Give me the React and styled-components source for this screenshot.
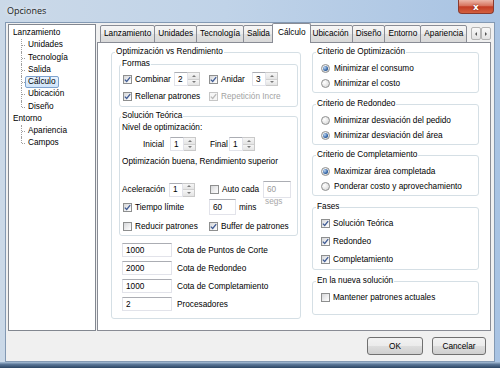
import React from 'react';
import styled, { createGlobalStyle } from 'styled-components';

const FONT_SIZE = '8.25px';

const GlobalStyle = createGlobalStyle`
  html, body { margin: 0; padding: 0; }
  body {
    width: 500px;
    height: 368px;
    overflow: hidden;
    font-family: "Liberation Sans", Arial, sans-serif;
    font-size: ${FONT_SIZE};
    color: #000;
    background: #fff;
  }
  * { box-sizing: border-box; }
`;

/* window chrome */

const Window = styled.div`
  width: 500px;
  height: 368px;
  display: flex;
  flex-direction: column;
  background: linear-gradient(90deg, #cbd9e8 0%, #c0d3e8 45%, #a8c3e3 100%);
`;

const TitleBar = styled.div`
  flex: none;
  height: 22px;
  display: flex;
  justify-content: space-between;
  align-items: flex-start;
  padding: 0 6px 0 7px;
`;

const Title = styled.div`
  font-family: "Open Sans", "Liberation Sans", sans-serif;
  font-size: 9px;
  line-height: 22px;
  color: #1b1b1b;
  text-shadow: 0 0 5px rgba(255, 255, 255, 0.95);
`;

const CloseButton = styled.div`
  width: 36px;
  height: 14px;
  display: flex;
  align-items: center;
  justify-content: center;
  border: 1px solid #8a3a2e;
  border-top: none;
  border-radius: 0 0 4px 4px;
  background: linear-gradient(#ecb7a9, #d7735d 45%, #c33c24 52%, #d3603f 100%);
  color: #fff;
  font-family: "DejaVu Sans", sans-serif;
  font-weight: bold;
  font-size: 9px;
  text-shadow: 0 0 2px #6b1a10;
`;

const Client = styled.div`
  flex: 1;
  margin: 0 5px;
  border: 1px solid #8399b3;
  background: #f0f0f0;
  display: flex;
  flex-direction: column;
  padding: 0 3px 6px 2px;
`;

const BottomFrame = styled.div`
  flex: none;
  height: 6px;
  background: linear-gradient(#a9c0d8, #5a7697 40%, #2c4563 100%);
`;

const Body = styled.div`
  height: 308px;
  display: flex;
  gap: 1px;
`;

/* tree */

const Tree = styled.div`
  width: 88px;
  margin-top: 1px;
  border: 1px solid #828790;
  background: #fff;
  padding: 2px 0 0 0;
`;

const TreeRow = styled.div`
  position: relative;
  height: 12.25px;
  display: flex;
  align-items: center;
  padding-left: ${p => (p.$leaf ? 16 : 1)}px;

  ${p => p.$leaf && `
    &::before {
      content: '';
      position: absolute;
      left: 12px;
      top: 0;
      bottom: ${p.$last ? '50%' : '0'};
      border-left: 1px dotted #a0a0a0;
    }
    &::after {
      content: '';
      position: absolute;
      left: 13px;
      top: 50%;
      width: 3px;
      border-top: 1px dotted #a0a0a0;
    }
  `}
`;

const TreeLabel = styled.span`
  line-height: 10px;
  padding: 0 2px;
  border: 1px solid ${p => (p.$selected ? '#7da2ce' : 'transparent')};
  border-radius: 2px;
  background: ${p => (p.$selected ? 'linear-gradient(#ebf4fe, #cfe4fa)' : 'none')};
`;

/* tabs */

const Tabs = styled.div`
  width: 394px;
  display: flex;
  flex-direction: column;
`;

const TabStrip = styled.div`
  height: 20px;
  margin-bottom: -1px;
  display: flex;
  align-items: flex-end;
  position: relative;
  z-index: 1;
`;

const TabList = styled.div`
  flex: 1;
  min-width: 0;
  height: 20px;
  overflow: hidden;
  display: flex;
  align-items: flex-end;
  padding-left: 4px;
`;

const Tab = styled.div`
  flex: none;
  position: relative;
  z-index: ${p => (p.$selected ? 2 : 0)};
  height: ${p => (p.$selected ? 20 : 18)}px;
  margin-left: ${p => (p.$selected ? -2 : -1)}px;
  margin-right: ${p => (p.$selected ? -2 : 0)}px;
  padding: 0 ${p => (p.$selected ? 5 : 3)}px;
  border: 1px solid #898c95;
  border-bottom: ${p => (p.$selected ? 'none' : '1px solid #898c95')};
  border-radius: 2px 2px 0 0;
  background: ${p =>
    p.$selected ? '#fff' : 'linear-gradient(#f6f6f6, #ececec 50%, #e0e0e0 51%, #d9d9d9)'};
  line-height: ${p => (p.$selected ? 18 : 16)}px;
  white-space: nowrap;
`;

const TabScroll = styled.div`
  flex: none;
  display: flex;
  margin-bottom: 3px;
`;

const ScrollButton = styled.div`
  width: 10px;
  height: 13px;
  border: 1px solid #b4b4b4;
  border-radius: 2px;
  background: linear-gradient(#f8f8f8, #e2e2e2);
  display: flex;
  align-items: center;
  justify-content: center;
`;

const Arrow = styled.span`
  width: 0;
  height: 0;
  ${p => {
    const c = p.$color || '#555';
    if (p.$dir === 'left') return `border-top: 2px solid transparent; border-bottom: 2px solid transparent; border-right: 2px solid ${c};`;
    if (p.$dir === 'right') return `border-top: 2px solid transparent; border-bottom: 2px solid transparent; border-left: 2px solid ${c};`;
    if (p.$dir === 'up') return `border-left: 2px solid transparent; border-right: 2px solid transparent; border-bottom: 2px solid ${c};`;
    return `border-left: 2px solid transparent; border-right: 2px solid transparent; border-top: 2px solid ${c};`;
  }}
`;

const TabPage = styled.div`
  flex: 1;
  background: #fff;
  border: 1px solid #898c95;
  display: flex;
  align-items: flex-start;
  gap: 11px;
  padding: 4px 0 0 13px;
`;

/* group boxes */

const Group = styled.fieldset`
  margin: ${p => p.$mt || 0}px 0 0 0;
  min-width: 0;
  width: ${p => (p.$w ? `${p.$w}px` : 'auto')};
  padding: 0;
  border: 1px solid #d5dfe5;
  border-radius: 3px;
`;

const Legend = styled.legend`
  margin-left: ${p => (p.$inner ? 1 : 3)}px;
  padding: 0 1px;
  line-height: 10px;
  font-size: ${FONT_SIZE};
`;

const GroupBody = styled.div`
  display: flex;
  flex-direction: column;
  gap: ${p => p.$gap || 0}px;
  padding: ${p => p.$pad};
`;

const RightColumn = styled.div`
  width: 167px;
  display: flex;
  flex-direction: column;
`;

/* rows and controls */

const Row = styled.div`
  display: flex;
  align-items: center;
  height: ${p => p.$h || 14}px;
  margin-top: ${p => p.$mt || 0}px;
  padding-left: ${p => p.$pl || 0}px;
  gap: ${p => p.$gap || 0}px;
`;

const Cell = styled.div`
  flex: none;
  display: flex;
  align-items: center;
  width: ${p => (p.$w ? `${p.$w}px` : 'auto')};
  padding-left: ${p => p.$pl || 0}px;
`;

const Text = styled.div`
  line-height: 10px;
  margin-top: ${p => p.$mt || 0}px;
  white-space: nowrap;
`;

const Label = styled.span`
  flex: none;
  white-space: nowrap;
  width: ${p => (p.$w ? `${p.$w}px` : 'auto')};
  color: ${p => (p.$disabled ? '#a3a3a3' : '#000')};
`;

const Box = styled.span`
  flex: none;
  width: 9px;
  height: 9px;
  margin-right: 3px;
  border: 1px solid ${p => (p.$disabled ? '#c6c6c6' : '#8e8f8f')};
  background: ${p =>
    p.$disabled ? '#f6f6f6' : 'linear-gradient(135deg, #d6d7d9 0%, #eeeeef 55%, #ffffff 100%)'};
  display: flex;
  align-items: center;
  justify-content: center;
`;

const RadioDot = styled.span`
  flex: none;
  width: 9px;
  height: 9px;
  margin-right: 4px;
  border-radius: 50%;
  border: 1px solid #8e8f8f;
  background: radial-gradient(circle at 35% 35%, #ffffff, #d2d2d2);
  display: flex;
  align-items: center;
  justify-content: center;

  &::after {
    content: '';
    display: ${p => (p.$on ? 'block' : 'none')};
    width: 5px;
    height: 5px;
    border-radius: 50%;
    background: radial-gradient(circle at 35% 35%, #bcd6f3, #2a5d9f 65%, #163f78);
  }
`;

const Field = styled.input`
  flex: none;
  width: ${p => p.$w}px;
  height: ${p => p.$h || 14}px;
  margin: 0 ${p => p.$mr || 0}px 0 0;
  padding: 0 0 0 3px;
  border: 1px solid #e2e3ea;
  border-top-color: #abadb3;
  background: #fff;
  font: inherit;
  font-size: ${FONT_SIZE};
  color: ${p => (p.disabled ? '#9a9a9a' : '#000')};
  outline: none;
`;

const Spin = styled.div`
  flex: none;
  display: flex;
  height: 14px;
`;

const SpinButtons = styled.div`
  width: 12px;
  display: flex;
  flex-direction: column;
  border: 1px solid #c9c9c9;
  border-left: none;
`;

const SpinHalf = styled.div`
  flex: 1;
  display: flex;
  align-items: center;
  justify-content: center;
  background: linear-gradient(#f6f6f6, #e4e4e4);
  & + & { border-top: 1px solid #d0d0d0; }
`;

const DisabledWrap = styled.div`
  display: flex;
  flex-direction: column;
  align-items: flex-start;
`;

const Caption = styled.span`
  line-height: 7px;
  margin: 0 0 -7px 2px;
  color: #a8a8a8;
`;

const ButtonRow = styled.div`
  display: flex;
  justify-content: flex-end;
  gap: 9px;
  margin-top: 6px;
  padding-right: 5px;
`;

const Button = styled.button`
  width: ${p => p.$w}px;
  height: 18px;
  padding: 0;
  border: 1px solid #707070;
  border-radius: 3px;
  background: linear-gradient(#f2f2f2, #ebebeb 50%, #dddddd 51%, #cfcfcf);
  font: inherit;
  font-size: ${FONT_SIZE};
  color: #000;
`;

const Check = ({ checked, disabled, children, w }) => (
  <>
    <Box $disabled={disabled}>
      {checked && (
        <svg width="7" height="7" viewBox="0 0 7 7">
          <path
            d="M0.8 3.6 L2.7 5.5 L6.2 1.2"
            fill="none"
            stroke={disabled ? '#b9b9b9' : '#3f5b94'}
            strokeWidth="1.3"
          />
        </svg>
      )}
    </Box>
    <Label $w={w} $disabled={disabled}>{children}</Label>
  </>
);

const Radio = ({ on, children }) => (
  <Row>
    <RadioDot $on={on} />
    <Label>{children}</Label>
  </Row>
);

const SpinBox = ({ value }) => (
  <Spin>
    <Field $w={14} readOnly value={value} />
    <SpinButtons>
      <SpinHalf><Arrow $dir="up" $color="#7a7a7a" /></SpinHalf>
      <SpinHalf><Arrow $dir="down" $color="#7a7a7a" /></SpinHalf>
    </SpinButtons>
  </Spin>
);

const treeData = [
  { name: 'Lanzamiento', children: ['Unidades', 'Tecnología', 'Salida', 'Cálculo', 'Ubicación', 'Diseño'] },
  { name: 'Entorno', children: ['Apariencia', 'Campos'] },
];

const tabs = ['Lanzamiento', 'Unidades', 'Tecnología', 'Salida', 'Cálculo', 'Ubicación', 'Diseño', 'Entorno', 'Apariencia'];

const bounds = [
  ['1000', 'Cota de Puntos de Corte'],
  ['2000', 'Cota de Redondeo'],
  ['1000', 'Cota de Completamiento'],
  ['2', 'Procesadores'],
];

const App = () => (
  <>
    <GlobalStyle />
    <Window>
      <TitleBar>
        <Title>Opciones</Title>
        <CloseButton>x</CloseButton>
      </TitleBar>
      <Client>
        <Body>
          <Tree>
            {treeData.map(node => (
              <React.Fragment key={node.name}>
                <TreeRow>
                  <TreeLabel>{node.name}</TreeLabel>
                </TreeRow>
                {node.children.map((c, i) => (
                  <TreeRow key={c} $leaf $last={i === node.children.length - 1}>
                    <TreeLabel $selected={c === 'Cálculo'}>{c}</TreeLabel>
                  </TreeRow>
                ))}
              </React.Fragment>
            ))}
          </Tree>

          <Tabs>
            <TabStrip>
              <TabList>
                {tabs.map(t => (
                  <Tab key={t} $selected={t === 'Cálculo'}>{t}</Tab>
                ))}
              </TabList>
              <TabScroll>
                <ScrollButton><Arrow $dir="left" /></ScrollButton>
                <ScrollButton><Arrow $dir="right" /></ScrollButton>
              </TabScroll>
            </TabStrip>

            <TabPage>
              <Group $w={190}>
                <Legend>Optimización vs Rendimiento</Legend>
                <GroupBody $pad="2px 2px 7px 7px">
                  <Group>
                    <Legend $inner>Formas</Legend>
                    <GroupBody $pad="3px 0 3px 3px" $gap={3}>
                      <Row>
                        <Cell $w={86}>
                          <Check checked w={39}>Combinar</Check>
                          <SpinBox value="2" />
                        </Cell>
                        <Cell>
                          <Check checked w={31}>Anidar</Check>
                          <SpinBox value="3" />
                        </Cell>
                      </Row>
                      <Row>
                        <Cell $w={86}>
                          <Check checked>Rellenar patrones</Check>
                        </Cell>
                        <Cell>
                          <Check checked disabled>Repetición Incre</Check>
                        </Cell>
                      </Row>
                    </GroupBody>
                  </Group>

                  <Group $mt={4}>
                    <Legend $inner>Solución Teórica</Legend>
                    <GroupBody $pad="0 0 2px 2px">
                      <Text $mt={2}>Nivel de optimización:</Text>
                      <Row $mt={4}>
                        <Cell $w={87} $pl={21}>
                          <Label $w={27}>Inicial</Label>
                          <SpinBox value="1" />
                        </Cell>
                        <Cell $pl={1}>
                          <Label $w={19}>Final</Label>
                          <SpinBox value="1" />
                        </Cell>
                      </Row>
                      <Text $mt={6}>Optimización buena, Rendimiento superior</Text>
                      <Row $mt={14} $h={17}>
                        <Cell $w={87}>
                          <Label $w={47}>Aceleración</Label>
                          <SpinBox value="1" />
                        </Cell>
                        <Cell $pl={1}>
                          <Check w={41}>Auto cada</Check>
                          <DisabledWrap>
                            <Field $w={28} $h={17} disabled readOnly value="60" />
                            <Caption>segs</Caption>
                          </DisabledWrap>
                        </Cell>
                      </Row>
                      <Row $mt={1} $h={16}>
                        <Cell $w={87} $pl={1}>
                          <Check checked>Tiempo límite</Check>
                        </Cell>
                        <Cell>
                          <Field $w={27} $h={16} $mr={3} readOnly value="60" />
                          <Label>mins</Label>
                        </Cell>
                      </Row>
                      <Row $mt={4}>
                        <Cell $w={87} $pl={1}>
                          <Check>Reducir patrones</Check>
                        </Cell>
                        <Cell>
                          <Check checked>Buffer de patrones</Check>
                        </Cell>
                      </Row>
                    </GroupBody>
                  </Group>

                  <GroupBody $pad="7px 0 0 0" $gap={4}>
                    {bounds.map(([v, l]) => (
                      <Row key={l} $pl={3} $gap={5}>
                        <Field $w={50} readOnly value={v} />
                        <Label>{l}</Label>
                      </Row>
                    ))}
                  </GroupBody>
                </GroupBody>
              </Group>

              <RightColumn>
                <Group>
                  <Legend>Criterio de Optimización</Legend>
                  <GroupBody $pad="4px 0 2px 8px" $gap={1}>
                    <Radio on>Minimizar el consumo</Radio>
                    <Radio>Minimizar el costo</Radio>
                  </GroupBody>
                </Group>
                <Group $mt={6}>
                  <Legend>Criterio de Redondeo</Legend>
                  <GroupBody $pad="4px 0 2px 8px" $gap={1}>
                    <Radio>Minimizar desviación del pedido</Radio>
                    <Radio on>Minimizar desviación del área</Radio>
                  </GroupBody>
                </Group>
                <Group $mt={5}>
                  <Legend>Criterio de Completamiento</Legend>
                  <GroupBody $pad="4px 0 2px 8px" $gap={1}>
                    <Radio on>Maximizar área completada</Radio>
                    <Radio>Ponderar costo y aprovechamiento</Radio>
                  </GroupBody>
                </Group>
                <Group $mt={6}>
                  <Legend>Fases</Legend>
                  <GroupBody $pad="4px 0 3px 8px" $gap={4}>
                    <Row><Check checked>Solución Teórica</Check></Row>
                    <Row><Check checked>Redondeo</Check></Row>
                    <Row><Check checked>Completamiento</Check></Row>
                  </GroupBody>
                </Group>
                <Group $mt={6}>
                  <Legend>En la nueva solución</Legend>
                  <GroupBody $pad="4px 0 10px 8px">
                    <Row><Check>Mantener patrones actuales</Check></Row>
                  </GroupBody>
                </Group>
              </RightColumn>
            </TabPage>
          </Tabs>
        </Body>
        <ButtonRow>
          <Button $w={56}>OK</Button>
          <Button $w={54}>Cancelar</Button>
        </ButtonRow>
      </Client>
      <BottomFrame />
    </Window>
  </>
);

export default App;
